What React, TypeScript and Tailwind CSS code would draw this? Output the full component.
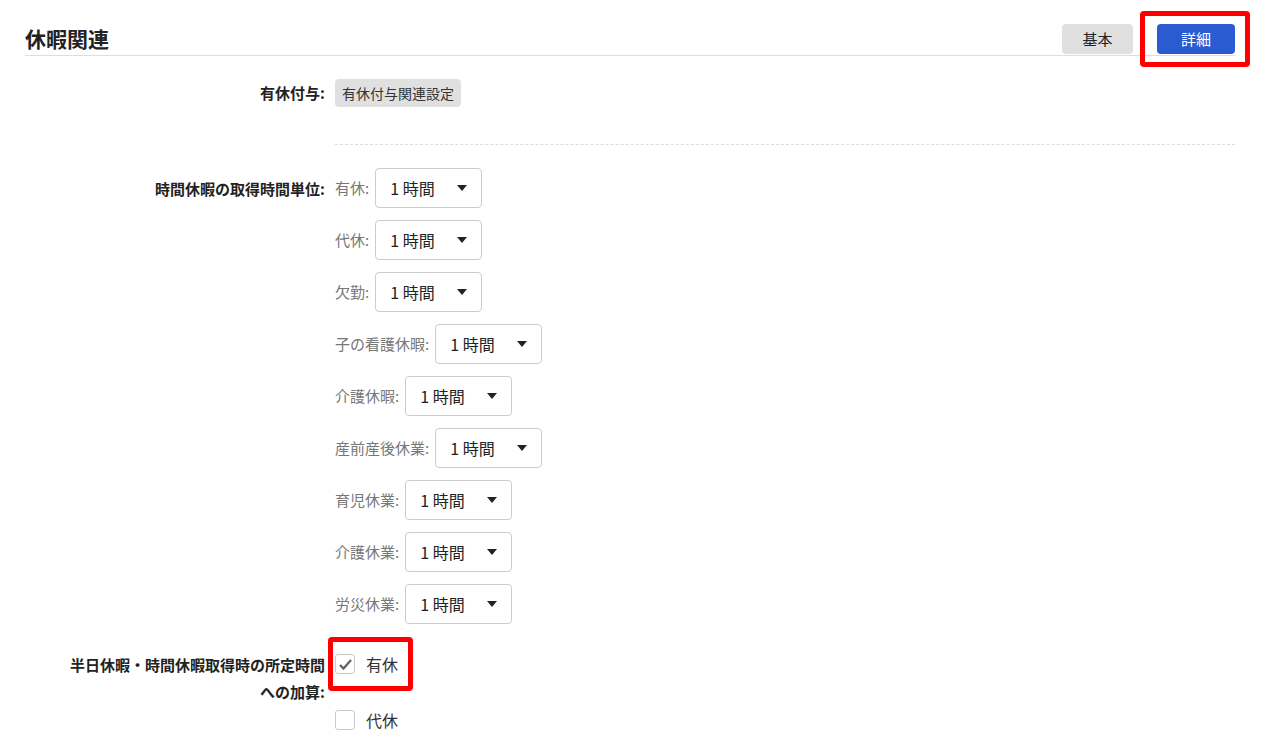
const font = { fontFamily: '"Noto Sans CJK JP", "Noto Sans", sans-serif' }

const units = ['有休', '代休', '欠勤', '子の看護休暇', '介護休暇', '産前産後休業', '育児休業', '介護休業', '労災休業']

function Select() {
  return (
    <div className="flex h-[40px] w-[107px] items-center justify-between rounded border border-[#cccccc] bg-white pl-[14px] pr-[14px] text-[16px] text-[#222]">
      <span>1 時間</span>
      <svg width="10" height="6" viewBox="0 0 10 6"><path d="M0 0h10L5 6z" fill="#222" /></svg>
    </div>
  )
}

function Check({ checked, label }: { checked: boolean; label: string }) {
  return (
    <div className="flex items-center gap-[11px] text-[16px] text-[#333]">
      <span className="flex h-[20px] w-[20px] items-center justify-center rounded-[3px] border border-[#cccccc] bg-white">
        {checked && (
          <svg width="13" height="11" viewBox="0 0 13 11"><path d="M1 6l3.5 3.5L12 1" stroke="#666" strokeWidth="2.4" fill="none" /></svg>
        )}
      </span>
      <span>{label}</span>
    </div>
  )
}

export default function App() {
  return (
    <div className="min-h-[739px] bg-white text-[#333]" style={font}>
      <div className="mx-[25px] mr-[37px] flex items-end justify-between border-b border-[#dddddd] pb-[1px] pt-[22px]">
        <h1 className="text-[21px] font-bold leading-[32px] text-[#222]">休暇関連</h1>
        <div className="flex items-center gap-[7px]">
          <button className="h-[30px] w-[71px] rounded bg-[#e0e0e0] text-[15px] text-[#222]">基本</button>
          <div className="-my-[13px] -mr-[15px] rounded-[4px] border-[5px] border-[#ff0000] py-[8px] pl-[12px] pr-[10px]">
            <button className="h-[30px] w-[78px] rounded bg-[#2a5bd0] text-[15px] text-white">詳細</button>
          </div>
        </div>
      </div>

      <div className="mr-[37px] flex items-center pt-[23px]">
        <div className="w-[325px] text-right text-[15px] font-bold text-[#222]">有休付与:</div>
        <button className="ml-[10px] h-[28px] rounded bg-[#e0e0e0] px-[7px] text-[14px] text-[#333]">有休付与関連設定</button>
      </div>

      <div className="ml-[335px] mr-[37px] mt-[37px] border-t border-dashed border-[#dddddd]" />

      <div className="mr-[37px] flex pt-[23px]">
        <div className="w-[325px] pt-[10px] text-right text-[15px] font-bold text-[#222]">時間休暇の取得時間単位:</div>
        <div className="ml-[10px] flex flex-col gap-[12px]">
          {units.map(u => (
            <div key={u} className="flex items-center gap-[6px]">
              <span className="text-[15px] text-[#777]">{u}:</span>
              <Select />
            </div>
          ))}
        </div>
      </div>

      <div className="flex pt-[27px]">
        <div className="w-[325px] text-right text-[15px] font-bold leading-[27px] text-[#222]">
          半日休暇・時間休暇取得時の所定時間<br />への加算:
        </div>
        <div className="ml-[3px] flex flex-col">
          <div className="-mt-[14px] w-fit rounded-[4px] border-[5px] border-[#ff0000] py-[10px] pl-[2px] pr-[10px]">
            <Check checked label="有休" />
          </div>
          <div className="ml-[7px] mt-[17px]">
            <Check checked={false} label="代休" />
          </div>
        </div>
      </div>
    </div>
  )
}
